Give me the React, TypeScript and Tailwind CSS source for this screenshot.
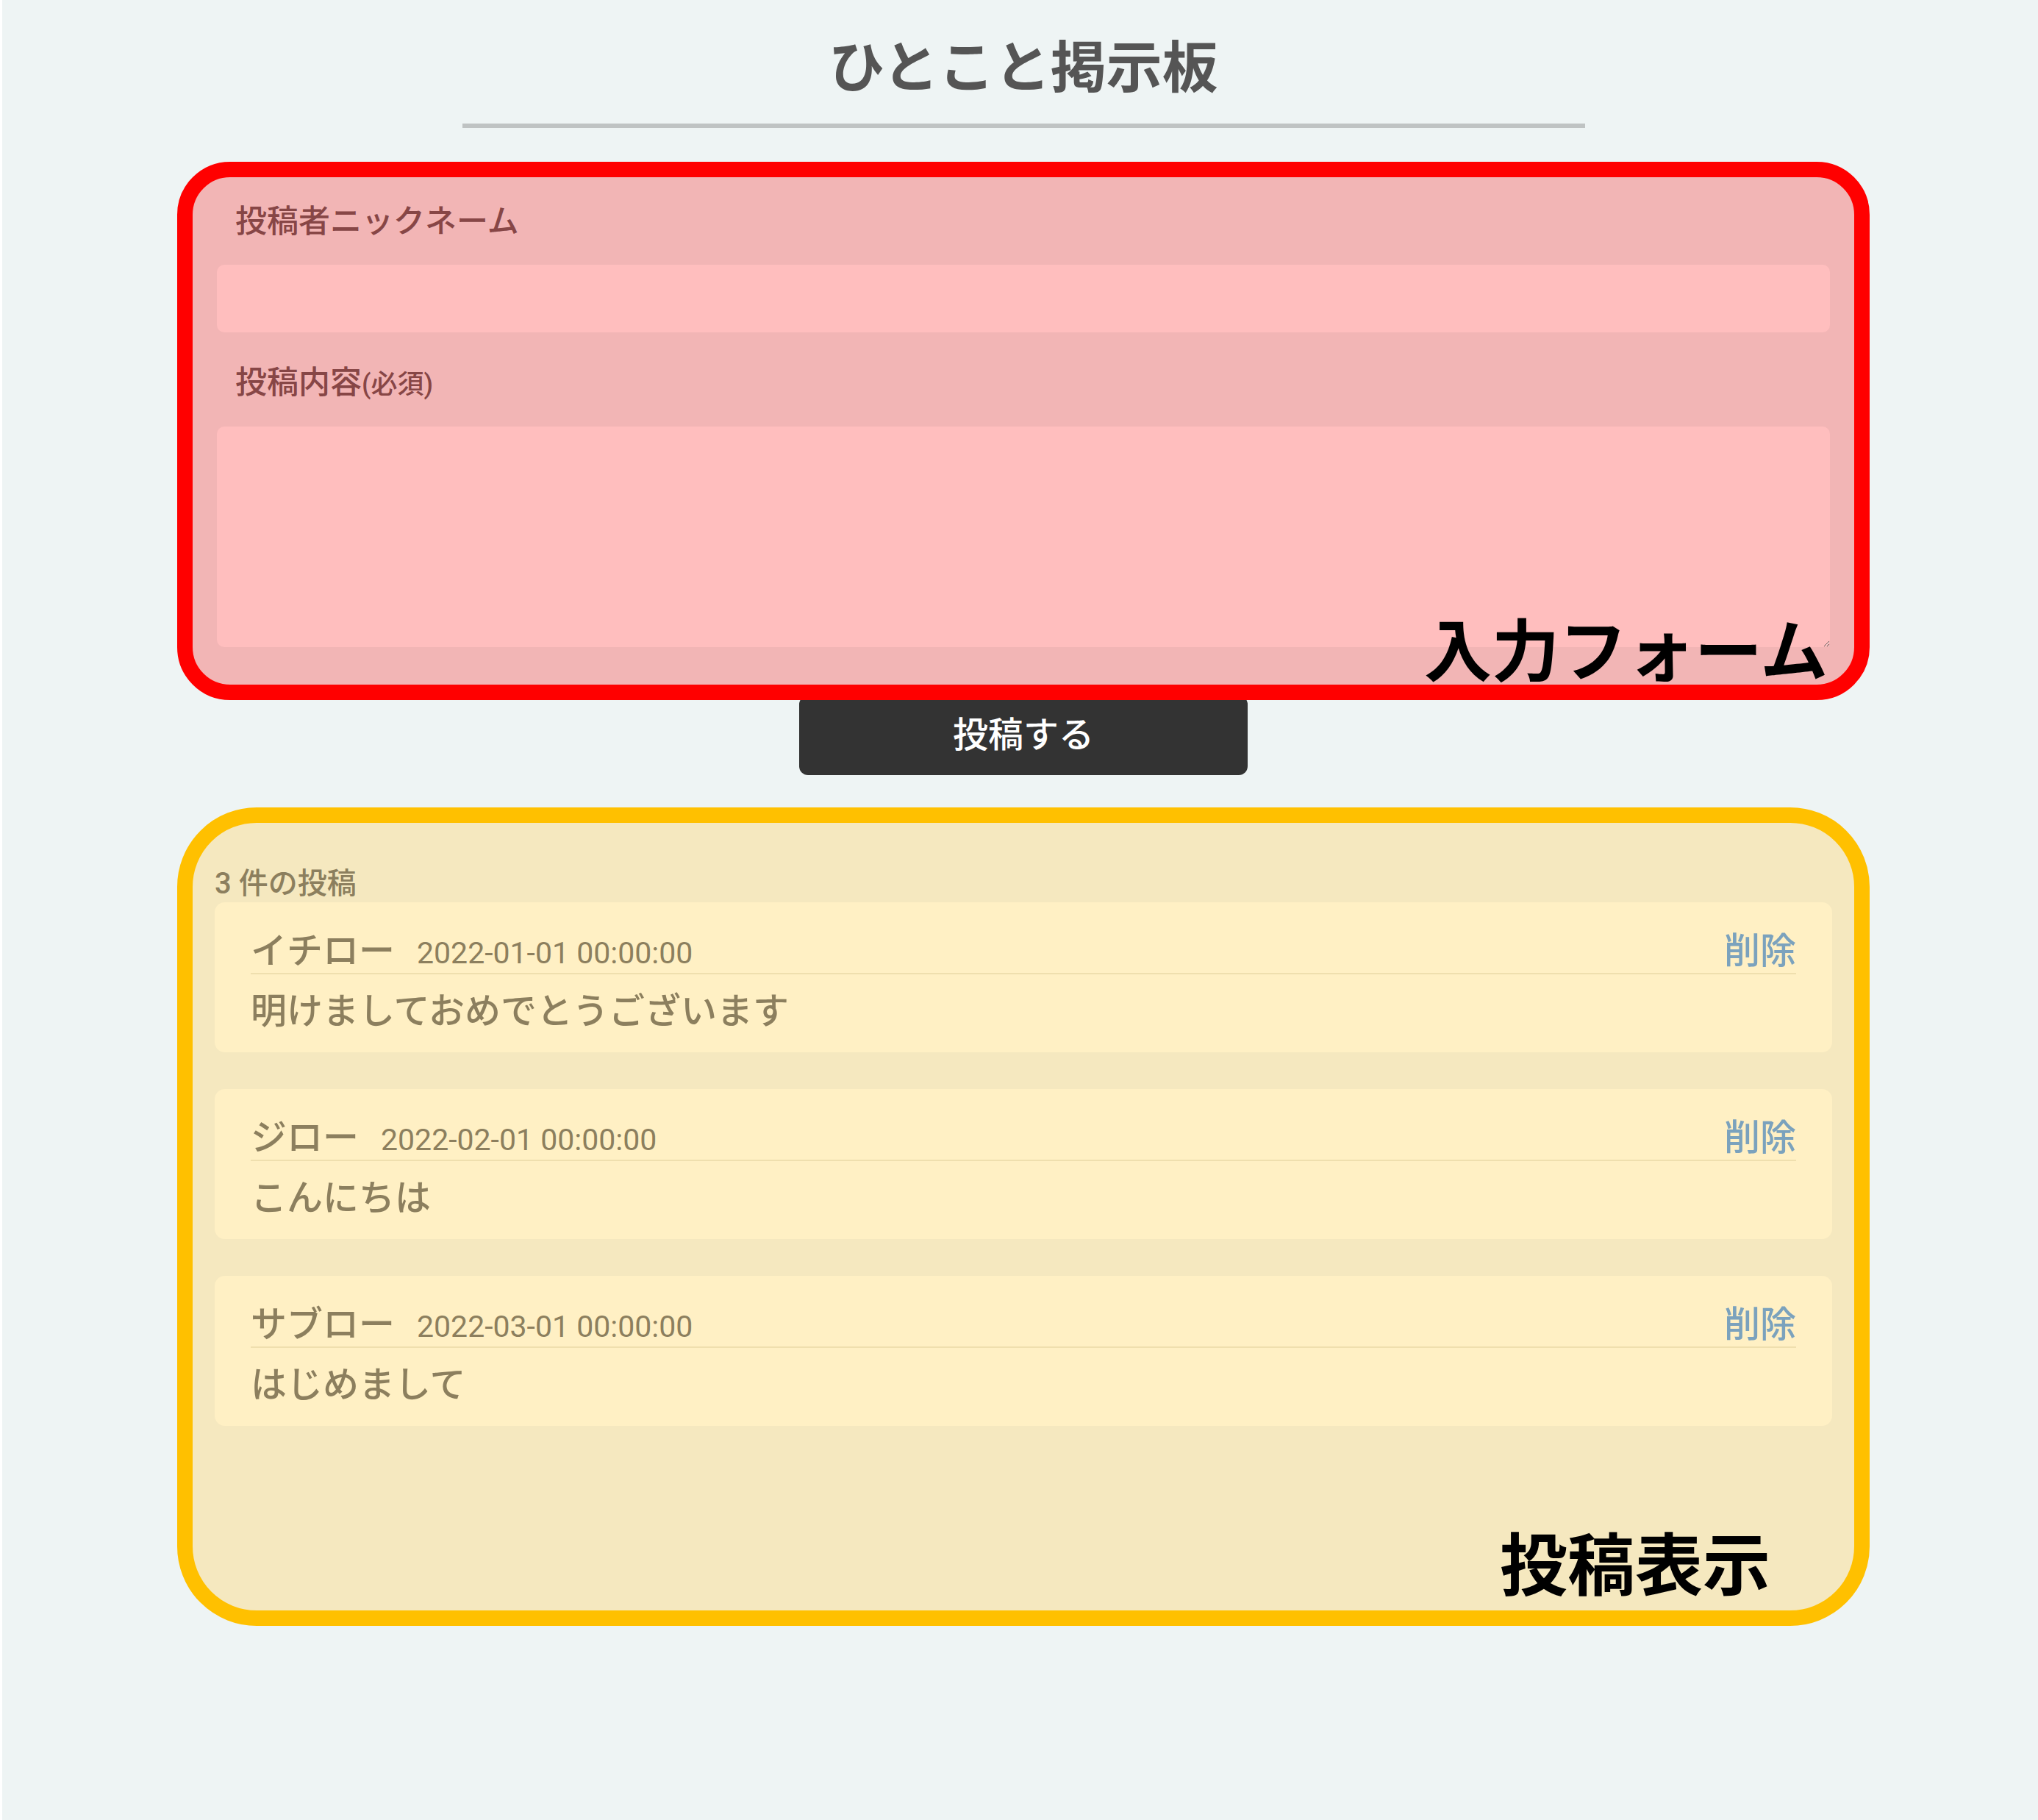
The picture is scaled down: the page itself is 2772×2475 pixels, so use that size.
import React from "react";

const posts = [
  { name: "イチロー", date: "2022-01-01 00:00:00", body: "明けましておめでとうございます" },
  { name: "ジロー", date: "2022-02-01 00:00:00", body: "こんにちは" },
  { name: "サブロー", date: "2022-03-01 00:00:00", body: "はじめまして" },
];

export default function App() {
  return (
    <div className="min-h-[2475px] bg-white flex font-['Roboto','Noto_Sans_CJK_JP',sans-serif]">
      <div className="ml-[3px] flex-1 bg-[#eef4f4] pl-[9px] flex flex-col items-center">
        <h1 className="mt-[48px] w-[1527px] border-b-[6px] border-[#bfc3c3] pb-[30px] text-center text-[76px] leading-[90px] font-bold text-[#555555]">
          ひとこと掲示板
        </h1>

        <div className="relative z-10 mt-[46px] w-[2302px] h-[732px] rounded-[72px] border-[21px] border-[#ff0000] bg-[#f2b5b5] px-[33px] pt-[28px] flex flex-col">
          <label className="block pl-[25px] text-[43px] leading-[64px] font-medium text-[#874646]">
            投稿者ニックネーム
          </label>
          <input
            type="text"
            className="mt-[27px] h-[92px] w-full rounded-[10px] bg-[#ffbebe] outline-none px-4 text-[40px]"
          />
          <label className="block mt-[36px] pl-[25px] text-[43px] leading-[64px] font-medium text-[#874646]">
            投稿内容<span className="text-[36px]">(必須)</span>
          </label>
          <textarea className="mt-[25px] h-[300px] w-full rounded-[10px] bg-[#ffbebe] outline-none p-4 text-[40px]" />
          <div className="absolute left-[1675px] top-[592px] font-['Noto_Sans_CJK_JP',sans-serif] text-[92px] leading-[92px] font-bold text-black whitespace-nowrap">
            入力フォーム
          </div>
        </div>

        <button className="-mt-[6px] w-[610px] h-[108px] rounded-[12px] bg-[#333333] text-white text-[48px] font-medium flex items-center justify-center">
          投稿する
        </button>

        <div className="relative mt-[44px] w-[2302px] h-[1113px] rounded-[108px] border-[21px] border-[#ffc000] bg-[#f5e8bf] px-[30px] pt-[59px]">
          <p className="mb-[1px] text-[40px] leading-[48px] font-medium text-[#8c7f5e]">3 件の投稿</p>
          <div className="flex flex-col gap-[50px]">
            {posts.map((p) => (
              <div key={p.name} className="rounded-[14px] bg-[#fff0c4] px-[49px] pt-[38px] pb-[26px]">
                <div className="flex items-baseline border-b-2 border-[#efdfae] h-[60px]">
                  <span className="text-[49px] leading-[58px] font-medium text-[#8c7f5e]">{p.name}</span>
                  <span className="ml-[30px] text-[41px] leading-[58px] text-[#8c7f5e]">{p.date}</span>
                  <span className="ml-auto text-[49px] leading-[58px] font-medium text-[#7ba2bd]">削除</span>
                </div>
                <p className="mt-[22px] text-[49px] leading-[58px] font-medium text-[#8c7f5e]">{p.body}</p>
              </div>
            ))}
          </div>
          <div className="absolute left-[1778px] top-[957px] font-['Noto_Sans_CJK_JP',sans-serif] text-[92px] leading-[92px] font-bold text-black whitespace-nowrap">
            投稿表示
          </div>
        </div>
      </div>
    </div>
  );
}
